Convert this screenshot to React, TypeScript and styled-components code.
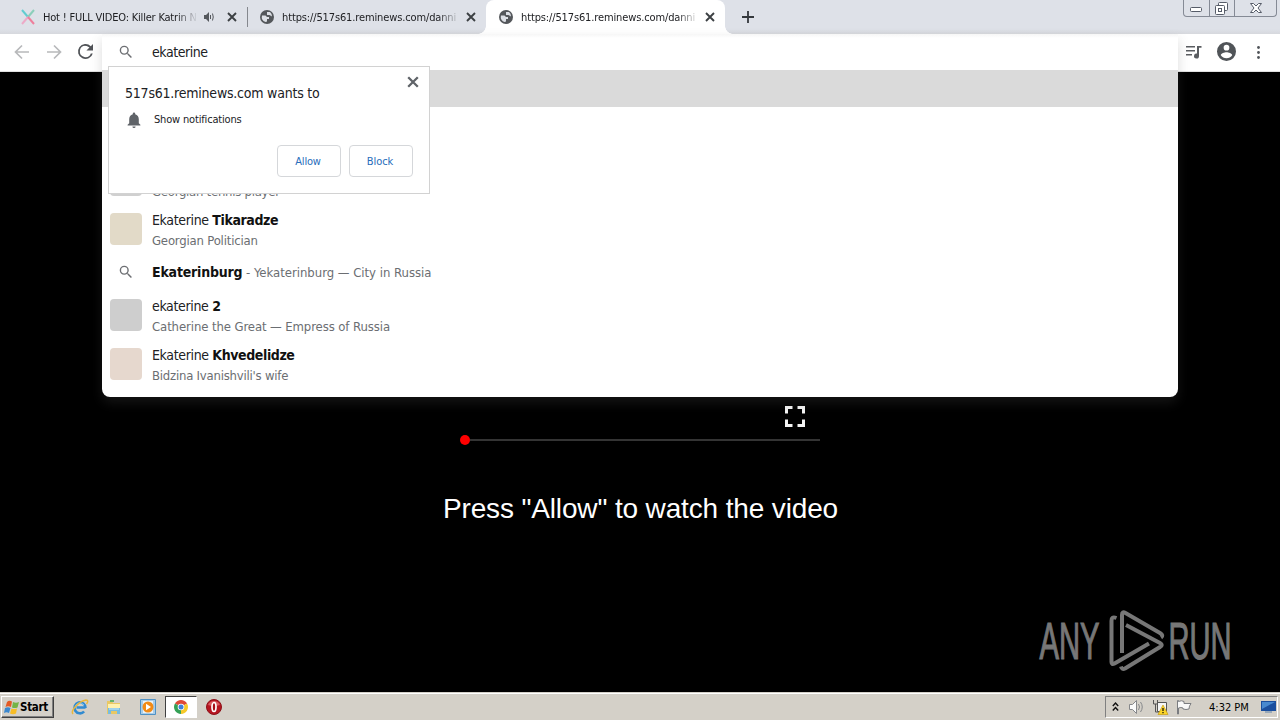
import React from 'react'
import styled, { createGlobalStyle } from 'styled-components'

const GlobalStyle = createGlobalStyle`
    * {
        box-sizing: border-box;
    }
    body {
        margin: 0;
        overflow: hidden;
        background: #000;
        font-family: 'DejaVu Sans Condensed', 'DejaVu Sans', sans-serif;
        font-stretch: condensed;
    }
    svg {
        display: block;
        flex: none;
        overflow: visible;
    }
`

interface TextProps {
    $size?: number;
    $spacing?: number;
    $color?: string;
}

const Text = styled.span<TextProps>`
    font-size: ${props => props.$size || 11}px;
    letter-spacing: ${props => props.$spacing || 0}px;
    color: ${props => props.$color || '#202124'};
    white-space: pre;
    b {
        font-weight: bold;
        letter-spacing: -.4px;
        color: #111;
    }
`

const Screen = styled.div`
    position: relative;
    display: flex;
    flex-direction: column;
    width: 1280px;
    height: 720px;
    overflow: hidden;
`

const TabStrip = styled.header`
    display: flex;
    height: 34px;
    background: linear-gradient(#dee1e8 29px, #d6d8dd);
`

const Tab = styled.div<{ $width: number; $active?: boolean; $pad: number }>`
    position: relative;
    display: flex;
    align-items: center;
    width: ${props => props.$width}px;
    padding: 0 0 0 ${props => props.$pad}px;
    background: ${props => props.$active ? '#fff' : 'transparent'};
    border-radius: 8px 8px 0 0;
    &::before,
    &::after {
        content: '';
        display: ${props => props.$active ? 'block' : 'none'};
        position: absolute;
        bottom: 0;
        width: 8px;
        height: 8px;
    }
    &::before {
        left: -8px;
        background: radial-gradient(circle at 0 0, transparent 7.5px, #fff 8px);
    }
    &::after {
        right: -8px;
        background: radial-gradient(circle at 100% 0, transparent 7.5px, #fff 8px);
    }
`

const TabTitle = styled.div<{ $width: number }>`
    width: ${props => props.$width}px;
    margin-left: 8px;
    padding-top: 1px;
    overflow: hidden;
    line-height: 16px;
    mask-image: linear-gradient(to right, #000 calc(100% - 22px), transparent);
    span {
        display: block;
    }
`

const TabEnd = styled.div`
    display: flex;
    gap: 13px;
    margin-left: auto;
    margin-right: 10px;
`

const Divider = styled.div`
    width: 1px;
    height: 20px;
    margin-top: 7px;
    background: #85888e;
`

const NewTab = styled.div`
    padding: 10px 0 0 16px;
`

const WindowButtons = styled.div`
    display: flex;
    height: 17px;
    margin: 0 3px 0 auto;
    border: 1px solid #858a95;
    border-top: 0;
    border-radius: 0 0 4px 4px;
`

const WindowButton = styled.div<{ $width: number }>`
    display: flex;
    align-items: center;
    justify-content: center;
    width: ${props => props.$width}px;
    & + & {
        border-left: 1px solid #858a95;
    }
`

const Toolbar = styled.div`
    display: flex;
    align-items: center;
    justify-content: space-between;
    height: 38px;
    padding: 0 15px 2px 14px;
    background: #fff;
    border-bottom: 1px solid #e0e0e0;
`

const ToolGroup = styled.div<{ $gap: number }>`
    display: flex;
    align-items: center;
    gap: ${props => props.$gap}px;
`

const Page = styled.main`
    display: flex;
    flex: 1;
    flex-direction: column;
    align-items: center;
    padding-top: 334px;
    background: #000;
`

const Player = styled.div`
    width: 360px;
    padding-right: 15px;
`

const PlayerTop = styled.div`
    display: flex;
    justify-content: flex-end;
    height: 21px;
`

const Seek = styled.div`
    display: flex;
    align-items: center;
    width: 360px;
    height: 10px;
    margin-top: 8px;
    &::before {
        content: '';
        width: 10px;
        height: 10px;
        border-radius: 50%;
        background: #f00;
    }
    &::after {
        content: '';
        flex: 1;
        height: 2px;
        background: #343434;
    }
`

const Prompt = styled.h1`
    margin: 48px 0 0;
    padding-left: 1px;
    font: 28px/32px 'Liberation Sans', Arial, sans-serif;
    letter-spacing: -.14px;
    color: #fff;
    white-space: nowrap;
`

const Watermark = styled.div`
    position: absolute;
    left: 1036px;
    top: 608px;
`

const Omnibox = styled.section`
    position: absolute;
    left: 102px;
    top: 34px;
    width: 1076px;
    padding-bottom: 8px;
    background: linear-gradient(#f6f6f6, #fff 4px);
    border-radius: 0 0 8px 8px;
    box-shadow: 0 6px 12px rgba(90, 90, 90, .22);
`

const Query = styled.div`
    display: flex;
    align-items: center;
    height: 36px;
    padding: 0 0 0 17px;
    gap: 19px;
`

const Selected = styled.div`
    height: 37px;
    margin-bottom: 49px;
    background: #dadada;
`

const Suggestion = styled.div`
    display: flex;
    height: 49px;
    padding: 8px 8px 0;
    gap: 10px;
`

const Thumb = styled.div<{ $color: string }>`
    width: 32px;
    height: 32px;
    border-radius: 4px;
    background: ${props => props.$color};
`

const Lines = styled.div`
    display: flex;
    flex-direction: column;
    margin-top: -3px;
    line-height: 20.5px;
`

const SearchSuggestion = styled.div`
    display: flex;
    align-items: center;
    height: 37px;
    padding: 0 0 2px 17px;
    gap: 19px;
    b {
        letter-spacing: -.2px;
    }
`

const Permission = styled.div`
    position: absolute;
    left: 108px;
    top: 66px;
    display: flex;
    flex-direction: column;
    width: 322px;
    height: 128px;
    padding: 9px 16px 16px;
    background: #fff;
    border: 1px solid #d2d2d2;
`

const PermissionHead = styled.div`
    display: flex;
    justify-content: space-between;
    height: 31px;
    margin-right: -6px;
    & > span {
        margin-top: 8px;
        line-height: 18px;
    }
`

const PermissionRow = styled.div`
    display: flex;
    align-items: center;
    gap: 12px;
    height: 25px;
    padding-left: 1px;
`

const Buttons = styled.div`
    display: flex;
    justify-content: flex-end;
    gap: 8px;
    margin-top: 13px;
`

const Button = styled.button`
    width: 64px;
    height: 32px;
    padding: 0 2px 1px 0;
    background: #fff;
    border: 1px solid #d5d7da;
    border-radius: 4px;
    font-family: inherit;
    font-stretch: inherit;
`

const Taskbar = styled.footer`
    display: flex;
    align-items: center;
    height: 28px;
    padding: 1px 2px 0 1px;
    background: #d4d0c8;
    border-top: 1px solid #d4d0c8;
    box-shadow: inset 0 1px #fff;
`

const Start = styled.div`
    display: flex;
    align-items: center;
    width: 53px;
    height: 22px;
    padding-left: 2px;
    gap: 1px;
    border: 1px solid;
    border-color: #fff #404040 #404040 #fff;
    box-shadow: inset -1px -1px #808080;
    font-weight: bold;
`

const Launcher = styled.div`
    display: flex;
    align-items: center;
    margin-left: 9px;
`

const Task = styled.div<{ $active?: boolean }>`
    display: flex;
    align-items: center;
    justify-content: center;
    width: ${props => props.$active ? 32 : 34}px;
    height: 22px;
    background: ${props => props.$active ? '#fff' : 'transparent'};
    border: ${props => props.$active ? '1px solid' : '0'};
    border-color: #404040 #fff #fff #404040;
`

const Tray = styled.div`
    display: flex;
    align-items: center;
    width: 173px;
    height: 22px;
    margin-left: auto;
    padding-left: 6px;
    border: 1px solid;
    border-color: #808080 #fff #fff #808080;
`

const TrayIcons = styled.div`
    display: flex;
    align-items: center;
    gap: 8px;
    width: 97px;
`

const Close = ({ color = '#3c4043', size = 10 }: { color?: string; size?: number }) => (
    <svg width={size} height={size} viewBox="0 0 10 10">
        <path d="M1 1l8 8M9 1l-8 8" stroke={color} strokeWidth="1.9" />
    </svg>
)

const Globe = () => (
    <svg width="14" height="14" viewBox="0 0 14 14">
        <circle cx="7" cy="7" r="7" fill="#54575b" />
        <path d="M2 5.500h3.500l1.500 1.500h2v2H7v2.500L5.500 12A5.500 5.500 0 0 1 2 5.500zM7 2h3a5.500 5.500 0 0 1 2 4.500L9.500 5H7z" fill="#dcdfe5" />
    </svg>
)

const Search = () => (
    <svg width="14" height="14" viewBox="2 2 20 20" fill="#6d6f73">
        <path d="M15.500 14h-.79l-.28-.27A6.470 6.470 0 0 0 16 9.500 6.500 6.500 0 1 0 9.500 16c1.610 0 3.090-.59 4.230-1.570l.27.28v.79l5 4.990L20.490 19zM9.500 14a4.500 4.500 0 1 1 0-9 4.500 4.500 0 0 1 0 9z" />
    </svg>
)

const Arrow = ({ right }: { right?: boolean }) => (
    <svg width="16" height="16" viewBox="0 0 16 16" fill="none" stroke="#b8b9bb" strokeWidth="1.7">
        <path d={right ? 'M1 8h13M8 1.500l6.500 6.500L8 14.500' : 'M15 8H2M8 1.500L1.500 8 8 14.500'} />
    </svg>
)

const AnyRun = () => (
    <svg width="210" height="66" viewBox="0 0 210 66">
        <g fill="#777" stroke="#777" strokeWidth="1.2" fontFamily="'Liberation Sans', sans-serif" fontSize="51">
            <text x="3.500" y="51" textLength="60" lengthAdjust="spacingAndGlyphs">ANY</text>
            <text x="132.500" y="51" textLength="63" lengthAdjust="spacingAndGlyphs">RUN</text>
        </g>
        <g fill="none" stroke="#777" strokeWidth="4" strokeLinejoin="round">
            <path d="M80.500 10c-4-1.500-5 0-5 3v41q0 3 3 1.500L113 35.500" />
            <path d="M86 45V7q0-4 3.500-2L124 25q4 2.500 1 4.500" />
            <path d="M90 17l34 18q3.500 2 0 4L89 60.500q-3 1.500-4-2" />
        </g>
    </svg>
)

interface Entry {
    color: string;
    name: string;
    match: string;
    detail: string;
    spacing: number;
}

const people: Entry[] = [
    { color: '#d0d0d0', name: 'Ekaterine ', match: 'Gorgodze', detail: 'Georgian tennis player', spacing: -.26 },
    { color: '#e2dac8', name: 'Ekaterine ', match: 'Tikaradze', detail: 'Georgian Politician', spacing: -.19 },
]

const morePeople: Entry[] = [
    { color: '#cecece', name: 'ekaterine ', match: '2', detail: 'Catherine the Great — Empress of Russia', spacing: -.1 },
    { color: '#e6d8ce', name: 'Ekaterine ', match: 'Khvedelidze', detail: "Bidzina Ivanishvili's wife", spacing: -.22 },
]

const Person: React.FC<{ entry: Entry }> = ({ entry }) => (
    <Suggestion>
        <Thumb $color={entry.color} />
        <Lines>
            <Text $size={14} $spacing={-.35}>{entry.name}<b>{entry.match}</b></Text>
            <Text $size={13} $spacing={entry.spacing} $color="#6b6e72">{entry.detail}</Text>
        </Lines>
    </Suggestion>
)

const App: React.FC = () => {
    return (
        <Screen>
            <GlobalStyle />
            <TabStrip>
                <Tab $width={247} $pad={21}>
                    <svg width="14" height="16" viewBox="0 0 14 16" fill="none" strokeWidth="2">
                        <path d="M1 1l6 7" stroke="#62cdd0" />
                        <path d="M13 1L7 8" stroke="#8ccfba" />
                        <path d="M7 8l-6 7" stroke="#edaac7" />
                        <path d="M7 8l6 7" stroke="#ee7f9c" />
                    </svg>
                    <TabTitle $width={155}><Text $spacing={-.2}>Hot ! FULL VIDEO: Killer Katrin N</Text></TabTitle>
                    <TabEnd>
                        <svg width="10" height="10" viewBox="0 0 10 10" fill="none" stroke="#55585d">
                            <path d="M0 3h2l3-3v10L2 7H0z" fill="#55585d" stroke="none" />
                            <path d="M6.500 3v4M8.500 1.500q1.500 3.500 0 7" />
                        </svg>
                        <Close />
                    </TabEnd>
                </Tab>
                <Divider />
                <Tab $width={238} $pad={12}>
                    <Globe />
                    <TabTitle $width={178}><Text $spacing={-.13}>https://517s61.reminews.com/danni</Text></TabTitle>
                    <TabEnd><Close /></TabEnd>
                </Tab>
                <Tab $width={239} $pad={13} $active>
                    <Globe />
                    <TabTitle $width={178}><Text $spacing={-.13}>https://517s61.reminews.com/danni</Text></TabTitle>
                    <TabEnd><Close /></TabEnd>
                </Tab>
                <NewTab>
                    <svg width="15" height="13" viewBox="0 0 15 13" stroke="#34383c" strokeWidth="1.8">
                        <path d="M1 7h12M7 1v12" />
                    </svg>
                </NewTab>
                <WindowButtons>
                    <WindowButton $width={25}>
                        <svg width="13" height="6" viewBox="0 0 13 6"><rect x=".5" y="2.500" width="11" height="4" rx="1" fill="#fff" stroke="#565c68" /></svg>
                    </WindowButton>
                    <WindowButton $width={25}>
                        <svg width="14" height="14" viewBox="0 0 14 14" fill="#fff" stroke="#565c68">
                            <rect x="3.500" y="1.500" width="9" height="8" rx="1" />
                            <rect x=".5" y="4.500" width="9" height="9" rx="1" />
                            <rect x="3.500" y="7.500" width="3" height="3" />
                        </svg>
                    </WindowButton>
                    <WindowButton $width={42}>
                        <svg width="12" height="12" viewBox="0 0 12 12">
                            <path d="M.5 1.500h3L6 4l2.500-2.500h3L8 6l3.500 4.500h-3L6 8l-2.500 2.500h-3L4 6z" fill="#fff" stroke="#565c68" />
                        </svg>
                    </WindowButton>
                </WindowButtons>
            </TabStrip>
            <Toolbar>
                <ToolGroup $gap={16}>
                    <Arrow />
                    <Arrow right />
                    <svg width="15" height="15" viewBox="4 4 16 16" fill="#505357">
                        <path d="M17.650 6.350A8 8 0 1 0 19.730 14h-2.080A6 6 0 1 1 12 6c1.660 0 3.140.69 4.220 1.780L13 11h7V4z" />
                    </svg>
                </ToolGroup>
                <ToolGroup $gap={15}>
                    <svg width="17" height="14" viewBox="0 0 17 14" fill="#5a5d61">
                        <path d="M1 1h9v1.600H1zM1 5h9v1.600H1zM1 9h6v1.600H1zM12 1h4.500v1.700H14V11a2.500 2.500 0 1 1-2-2.400z" />
                    </svg>
                    <svg width="19" height="19" viewBox="2 2 20 20" fill="#505458">
                        <path d="M12 2a10 10 0 1 0 0 20 10 10 0 0 0 0-20zm0 3a3 3 0 1 1 0 6 3 3 0 0 1 0-6zm0 14.200a7.200 7.200 0 0 1-6-3.220c.03-1.990 4-3.080 6-3.080s5.970 1.090 6 3.080a7.200 7.200 0 0 1-6 3.220z" />
                    </svg>
                    <svg width="14" height="14" viewBox="0 0 14 14" fill="#505458">
                        <circle cx="7.500" cy="2.500" r="1.400" /><circle cx="7.500" cy="7.500" r="1.400" /><circle cx="7.500" cy="12.500" r="1.400" />
                    </svg>
                </ToolGroup>
            </Toolbar>
            <Page>
                <Player>
                    <PlayerTop>
                        <svg width="20" height="21" viewBox="0 0 20 21" fill="none" stroke="#f4f4f4" strokeWidth="3">
                            <path d="M1.500 7.500v-6h6M12.500 1.500h6v6M18.500 13.500v6h-6M7.500 19.500h-6v-6" />
                        </svg>
                    </PlayerTop>
                    <Seek />
                </Player>
                <Prompt>Press "Allow" to watch the video</Prompt>
            </Page>
            <Taskbar>
                <Start>
                    <svg width="15" height="15" viewBox="0 0 15 15">
                        <path d="M3 2q2-2 5-.5L7 7q-3-1.500-5.500 0z" fill="#e35a24" />
                        <path d="M9 2q3 1.500 6 0l-1.500 5.500q-3 1-5.500 0z" fill="#75b445" />
                        <path d="M1 8q3-1.500 5.500 0L5 13q-2.500-1.500-5 0z" fill="#3b88cf" />
                        <path d="M7.500 8.500q3 1 5.500 0L12 13.500q-3 1.500-6 0z" fill="#f8bd25" />
                    </svg>
                    <Text $size={11.5} $spacing={-.3} $color="#000">Start</Text>
                </Start>
                <Launcher>
                    <Task>
                        <svg width="18" height="18" viewBox="0 0 18 18" fill="none">
                            <path d="M14.500 9.500H5.500M14.500 10a5.500 5.500 0 1 0-1.400 3.500" stroke="#328bd0" strokeWidth="2.600" />
                            <path d="M4 10a5 5 0 0 1 9-3" stroke="#7fcaf3" />
                            <path d="M2 16C-1 13 8 3 15 2c2.500 0 2 2 .5 4" stroke="#e9b73c" strokeWidth="1.500" />
                        </svg>
                    </Task>
                    <Task>
                        <svg width="16" height="16" viewBox="0 0 16 16">
                            <path d="M1 2h5l1 2h7v11H1z" fill="#e9c863" />
                            <path d="M2 5h12v5H2z" fill="#fff1ae" />
                            <path d="M4 1h4v2H4z" fill="#65b268" />
                            <path d="M2 9h12v6h-3v-3H5v3H2z" fill="#78bce0" />
                            <path d="M3 10h10" stroke="#c7e9f6" />
                        </svg>
                    </Task>
                    <Task>
                        <svg width="16" height="16" viewBox="0 0 16 16">
                            <path d="M.5.5h15v15H.5z" fill="#a8cde9" stroke="#4f91c4" />
                            <path d="M3 2h10v12H3z" fill="#e9f3fa" />
                            <circle cx="8" cy="8" r="5.500" fill="#f28b16" />
                            <path d="M6 4.800L11 8l-5 3.200z" fill="#fff" />
                        </svg>
                    </Task>
                    <Task $active>
                        <svg width="14" height="14" viewBox="0 0 14 14">
                            <path d="M7 7L.94 3.500A7 7 0 0 1 13.060 3.500z" fill="#df4937" />
                            <path d="M7 7L.94 3.500A7 7 0 0 0 7 14z" fill="#35a156" />
                            <path d="M7 7l6.060-3.500A7 7 0 0 1 7 14z" fill="#f6c929" />
                            <circle cx="7" cy="7" r="3.300" fill="#fff" />
                            <circle cx="7" cy="7" r="2.500" fill="#3f80da" />
                        </svg>
                    </Task>
                    <Task>
                        <svg width="16" height="16" viewBox="0 0 16 16">
                            <circle cx="8" cy="8" r="7.500" fill="#b51520" stroke="#8d1119" />
                            <path d="M2 6a6.500 6.500 0 0 1 12 0q-6 2-12 0" fill="#db5b60" />
                            <ellipse cx="8" cy="8" rx="2" ry="4.500" fill="#a70d16" stroke="#fff" strokeWidth="1.700" />
                        </svg>
                    </Task>
                </Launcher>
                <Tray>
                    <TrayIcons>
                        <svg width="7" height="10" viewBox="0 0 7 10" fill="none" stroke="#111" strokeWidth="1.400">
                            <path d="M.8 4l2.700-3 2.700 3M.8 8.500l2.700-3 2.700 3" />
                        </svg>
                        <svg width="17" height="16" viewBox="-1 0 17 16" fill="none" stroke="#85878a">
                            <path d="M1.500 5.500h3l4-4v13l-4-4h-3z" fill="#fafafa" />
                            <path d="M10.500 5q2 3 0 6M12.500 3q3.500 5 0 10" />
                        </svg>
                        <svg width="16" height="16" viewBox="0 0 16 16">
                            <path d="M5.500 3.500h9v9h-9z" fill="#f5f5f5" stroke="#555" />
                            <path d="M1.500 1v4h4V1M3.500 5v8h4" fill="none" stroke="#555" />
                            <path d="M11 6l5 9.500H6z" fill="#fbd527" stroke="#c99c12" strokeWidth=".7" />
                            <path d="M11 9v3M11 13v1.300" stroke="#29230c" strokeWidth="1.400" />
                        </svg>
                        <svg width="16" height="16" viewBox="0 0 16 16" fill="#f8f8f8" stroke="#7a7c80">
                            <path d="M1.500 15V1.500h1v1q3-1.500 5.500 0v2h7q-2 2.500-2 5.500-3 1-6 0V9q-2-1-4.500 0v6z" />
                        </svg>
                    </TrayIcons>
                    <Text $color="#000">4:32 PM</Text>
                    <svg width="16" height="14" viewBox="0 0 16 14" style={{ marginLeft: 'auto' }}>
                        <path d="M0 1h15v10H0z" fill="#1b4f9e" />
                        <path d="M1 2h13L1 9z" fill="#4889cf" />
                        <path d="M4 11h7v2H4z" fill="#99a9b9" />
                    </svg>
                </Tray>
            </Taskbar>
            <Watermark><AnyRun /></Watermark>
            <Omnibox>
                <Query>
                    <Search />
                    <Text $size={14} $spacing={-.45}>ekaterine</Text>
                </Query>
                <Selected />
                {people.map(entry => <Person key={entry.match} entry={entry} />)}
                <SearchSuggestion>
                    <Search />
                    <Text $size={13} $spacing={-.02} $color="#6b6e72"><Text $size={14}><b>Ekaterinburg</b></Text> - Yekaterinburg — City in Russia</Text>
                </SearchSuggestion>
                {morePeople.map(entry => <Person key={entry.match} entry={entry} />)}
            </Omnibox>
            <Permission>
                <PermissionHead>
                    <Text $size={14} $spacing={-.22}>517s61.reminews.com wants to</Text>
                    <Close color="#5f6368" size={12} />
                </PermissionHead>
                <PermissionRow>
                    <svg width="16" height="16" viewBox="2 2 20 20" fill="#5f6368">
                        <path d="M12 22a2 2 0 0 0 2-2h-4a2 2 0 0 0 2 2zm6-6v-5c0-3.070-1.640-5.640-4.500-6.320V4a1.500 1.500 0 0 0-3 0v.68C7.630 5.360 6 7.920 6 11v5l-2 2v1h16v-1z" />
                    </svg>
                    <Text $spacing={-.17}>Show notifications</Text>
                </PermissionRow>
                <Buttons>
                    <Button><Text $spacing={-.2} $color="#286dbb">Allow</Text></Button>
                    <Button><Text $spacing={-.1} $color="#286dbb">Block</Text></Button>
                </Buttons>
            </Permission>
        </Screen>
    )
}

export default App
